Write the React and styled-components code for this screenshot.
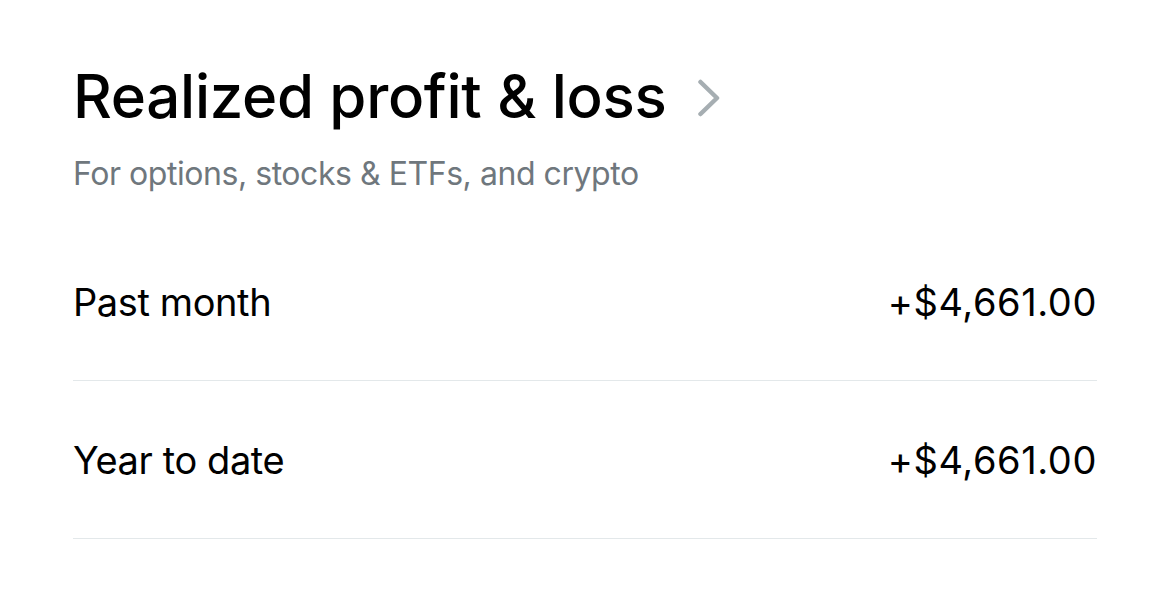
import React from "react";
import styled, { createGlobalStyle } from "styled-components";

const Global = createGlobalStyle`
  body {
    margin: 0;
    background: #ffffff;
    font-family: Inter, "Liberation Sans", sans-serif;
    color: #000000;
  }
`;

const Page = styled.div`
  padding: 59px 73px 0 73px;
`;

const TitleRow = styled.div`
  display: flex;
  align-items: center;
  gap: 30px;
  height: 74px;
`;

const Title = styled.h1`
  margin: 0;
  font-size: 60px;
  font-weight: 500;
  letter-spacing: -0.3px;
  line-height: 74px;
`;

const Subtitle = styled.p`
  margin: 21px 0 0 0;
  font-size: 32px;
  color: #6f777d;
  line-height: 40px;
  letter-spacing: -0.45px;
`;

const List = styled.div`
  margin-top: 29px;
`;

const Row = styled.div`
  display: flex;
  justify-content: space-between;
  align-items: center;
  height: 157px;
  border-bottom: 1px solid #e3e8ea;
  font-size: 38px;
`;

const Label = styled.span`
  letter-spacing: -0.4px;
`;

const Value = styled.span`
  letter-spacing: 0.6px;
`;

function Chevron() {
  return (
    <svg width="24" height="38" viewBox="0 0 24 38" fill="none" style={{ marginTop: 4 }}>
      <path d="M3.5 3 L20 19 L3.5 35" stroke="#a6aeb2" strokeWidth="4.5" strokeLinecap="round" strokeLinejoin="round" />
    </svg>
  );
}

const rows = [
  { label: "Past month", value: "+$4,661.00" },
  { label: "Year to date", value: "+$4,661.00" },
];

export default function App() {
  return (
    <>
      <Global />
      <Page>
        <TitleRow>
          <Title>Realized profit &amp; loss</Title>
          <Chevron />
        </TitleRow>
        <Subtitle>For options, stocks &amp; ETFs, and crypto</Subtitle>
        <List>
          {rows.map((r) => (
            <Row key={r.label}>
              <Label>{r.label}</Label>
              <Value>{r.value}</Value>
            </Row>
          ))}
        </List>
      </Page>
    </>
  );
}
